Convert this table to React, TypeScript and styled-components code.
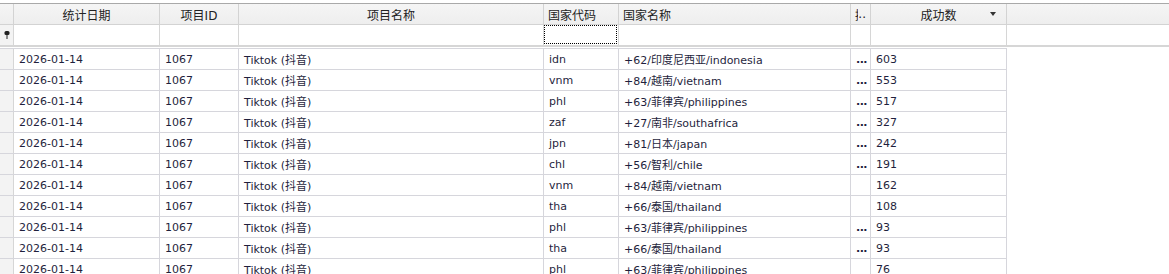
import { createGlobalStyle, styled } from "styled-components";

const GlobalStyle = createGlobalStyle`
   html, body {
      margin: 0;
      padding: 0;
      background: #fff;
      font-family: "DejaVu Sans", "Noto Sans CJK SC", sans-serif;
      font-size: 11px;
      color: #1f1f3d;
   }
   * {
      box-sizing: border-box;
   }
`;

const COLS = "14px 146px 79px 305px 75px 232px 20px 136px";

const Grid = styled.div`
   padding-top: 3px;
   width: 1169px;
   height: 274px;
   overflow: hidden;
`;

const HeaderRow = styled.div`
   display: grid;
   grid-template-columns: ${COLS} 1fr;
   height: 22px;
   border-top: 1px solid #a9a9a9;
   border-bottom: 1px solid #d3d3d3;
   background: linear-gradient(#f5f5f5, #eeeeee);
`;

const HeadCell = styled.div<{ $align?: "left" | "center" }>`
   display: flex;
   align-items: center;
   justify-content: ${({ $align }) => ($align === "left" ? "flex-start" : "center")};
   position: relative;
   padding: 0 4px;
   border-right: 1px solid #d3d3d3;
   font-size: 12px;
   color: #222;
   white-space: nowrap;
   overflow: hidden;
`;

const SortArrow = styled.span`
   position: absolute;
   right: 10px;
   top: 8px;
   width: 0;
   height: 0;
   border-left: 3.5px solid transparent;
   border-right: 3.5px solid transparent;
   border-top: 4px solid #333;
`;

const Clip = styled.span`
   display: inline-block;
   width: 6px;
   overflow: hidden;
`;

const FilterRow = styled.div`
   display: grid;
   grid-template-columns: ${COLS};
   height: 22px;
   border-bottom: 2px solid #d6d6d6;
`;

const FilterCell = styled.div<{ $focus?: boolean }>`
   border-right: 1px solid #d6d6d6;
   position: relative;
   &::after {
      content: "";
      display: ${({ $focus }) => ($focus ? "block" : "none")};
      position: absolute;
      inset: 0 1px 1px 0;
      border: 1px dotted #000;
   }
`;

const Indicator = styled.div`
   background: #f3f3f3;
   border-right: 1px solid #d6d6d6;
   display: flex;
   align-items: center;
   justify-content: center;
`;

const Body = styled.div`
   margin-top: 1px;
   width: 1007px;
   border-top: 1px solid #d6d6dc;
`;

const Row = styled.div`
   display: grid;
   grid-template-columns: ${COLS};
   height: 21px;
   border-bottom: 1px solid #d6d6dc;
`;

const Cell = styled.div<{ $bold?: boolean }>`
   display: flex;
   align-items: center;
   padding: 0 5px;
   border-right: 1px solid #d6d6dc;
   white-space: nowrap;
   overflow: hidden;
   font-weight: ${({ $bold }) => ($bold ? 700 : 400)};
   letter-spacing: ${({ $bold }) => ($bold ? "-0.5px" : "0")};
`;

const Pin = () => (
   <svg width="6" height="8" viewBox="0 0 6 8">
      <rect x="0.5" y="0" width="5" height="4" rx="1.5" fill="#222" />
      <rect x="2.5" y="3" width="1" height="5" fill="#222" />
   </svg>
);

type Item = [string, string, number, boolean];

const rows: Item[] = [
   ["idn", "+62/印度尼西亚/indonesia", 603, true],
   ["vnm", "+84/越南/vietnam", 553, true],
   ["phl", "+63/菲律宾/philippines", 517, true],
   ["zaf", "+27/南非/southafrica", 327, true],
   ["jpn", "+81/日本/japan", 242, true],
   ["chl", "+56/智利/chile", 191, true],
   ["vnm", "+84/越南/vietnam", 162, false],
   ["tha", "+66/泰国/thailand", 108, false],
   ["phl", "+63/菲律宾/philippines", 93, true],
   ["tha", "+66/泰国/thailand", 93, true],
   ["phl", "+63/菲律宾/philippines", 76, false],
];

const App = () => {
   return (
      <>
         <GlobalStyle />
         <Grid>
            <HeaderRow>
               <HeadCell />
               <HeadCell>统计日期</HeadCell>
               <HeadCell>项目ID</HeadCell>
               <HeadCell>项目名称</HeadCell>
               <HeadCell $align="left">国家代码</HeadCell>
               <HeadCell $align="left">国家名称</HeadCell>
               <HeadCell $align="left">
                  <Clip>接码数</Clip>..
               </HeadCell>
               <HeadCell>
                  成功数
                  <SortArrow />
               </HeadCell>
               <HeadCell style={{ borderRight: "none" }} />
            </HeaderRow>
            <FilterRow>
               <Indicator>
                  <Pin />
               </Indicator>
               <FilterCell />
               <FilterCell />
               <FilterCell />
               <FilterCell $focus />
               <FilterCell />
               <FilterCell />
               <FilterCell />
            </FilterRow>
            <Body>
               {rows.map(([code, name, count, more], i) => (
                  <Row key={i}>
                     <Indicator />
                     <Cell>2026-01-14</Cell>
                     <Cell>1067</Cell>
                     <Cell>Tiktok (抖音)</Cell>
                     <Cell>{code}</Cell>
                     <Cell>{name}</Cell>
                     <Cell $bold>{more ? "..." : ""}</Cell>
                     <Cell>{count}</Cell>
                  </Row>
               ))}
            </Body>
         </Grid>
      </>
   );
};

export default App;
